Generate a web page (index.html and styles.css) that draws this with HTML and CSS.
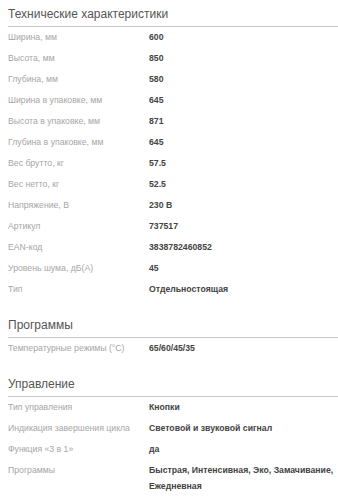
FILE: index.html
```html
<!DOCTYPE html>
<html lang="ru">
<head>
    <meta charset="UTF-8">
    <meta name="viewport" content="width=device-width, initial-scale=1.0">
    <title>Технические характеристики</title>
    <link rel="stylesheet" href="styles.css">
</head>
<body>
    <div class="specs">
        <section class="spec-group">
            <h2 class="spec-title">Технические характеристики</h2>
            <div class="spec-row"><span class="spec-name">Ширина, мм</span><span class="spec-value">600</span></div>
            <div class="spec-row"><span class="spec-name">Высота, мм</span><span class="spec-value">850</span></div>
            <div class="spec-row"><span class="spec-name">Глубина, мм</span><span class="spec-value">580</span></div>
            <div class="spec-row"><span class="spec-name">Ширина в упаковке, мм</span><span class="spec-value">645</span></div>
            <div class="spec-row"><span class="spec-name">Высота в упаковке, мм</span><span class="spec-value">871</span></div>
            <div class="spec-row"><span class="spec-name">Глубина в упаковке, мм</span><span class="spec-value">645</span></div>
            <div class="spec-row"><span class="spec-name">Вес брутто, кг</span><span class="spec-value">57.5</span></div>
            <div class="spec-row"><span class="spec-name">Вес нетто, кг</span><span class="spec-value">52.5</span></div>
            <div class="spec-row"><span class="spec-name">Напряжение, В</span><span class="spec-value">230 В</span></div>
            <div class="spec-row"><span class="spec-name">Артикул</span><span class="spec-value">737517</span></div>
            <div class="spec-row"><span class="spec-name">EAN-код</span><span class="spec-value">3838782460852</span></div>
            <div class="spec-row"><span class="spec-name">Уровень шума, дБ(А)</span><span class="spec-value">45</span></div>
            <div class="spec-row"><span class="spec-name">Тип</span><span class="spec-value">Отдельностоящая</span></div>
        </section>

        <section class="spec-group">
            <h2 class="spec-title">Программы</h2>
            <div class="spec-row"><span class="spec-name">Температурные режимы (°C)</span><span class="spec-value">65/60/45/35</span></div>
        </section>

        <section class="spec-group">
            <h2 class="spec-title">Управление</h2>
            <div class="spec-row"><span class="spec-name">Тип управления</span><span class="spec-value">Кнопки</span></div>
            <div class="spec-row"><span class="spec-name">Индикация завершения цикла</span><span class="spec-value">Световой и звуковой сигнал</span></div>
            <div class="spec-row"><span class="spec-name">Функция «3 в 1»</span><span class="spec-value">да</span></div>
            <div class="spec-row"><span class="spec-name">Программы</span><span class="spec-value">Быстрая, Интенсивная, Эко, Замачивание, Ежедневная</span></div>
        </section>
    </div>
</body>
</html>
```

FILE: styles.css
```css
body {
    margin: 0;
    background: #fff;
    font-family: 'Liberation Sans', Arial, sans-serif;
}

.specs {
    padding: 0 0 0 8px;
}

.spec-group + .spec-group {
    margin-top: 11px;
}

.spec-title {
    margin: 0;
    padding: 6px 0 4px;
    font-size: 12px;
    line-height: 16px;
    font-weight: normal;
    color: #555;
    border-bottom: 1px solid #c8c8c8;
}

.spec-row {
    display: grid;
    grid-template-columns: 141px 1fr;
    font-size: 8.7px;
    line-height: 16px;
    padding: 2px 0 3px;
}

.spec-name {
    color: #a6a6a6;
}

.spec-value {
    color: #444;
    font-weight: bold;
}
```
